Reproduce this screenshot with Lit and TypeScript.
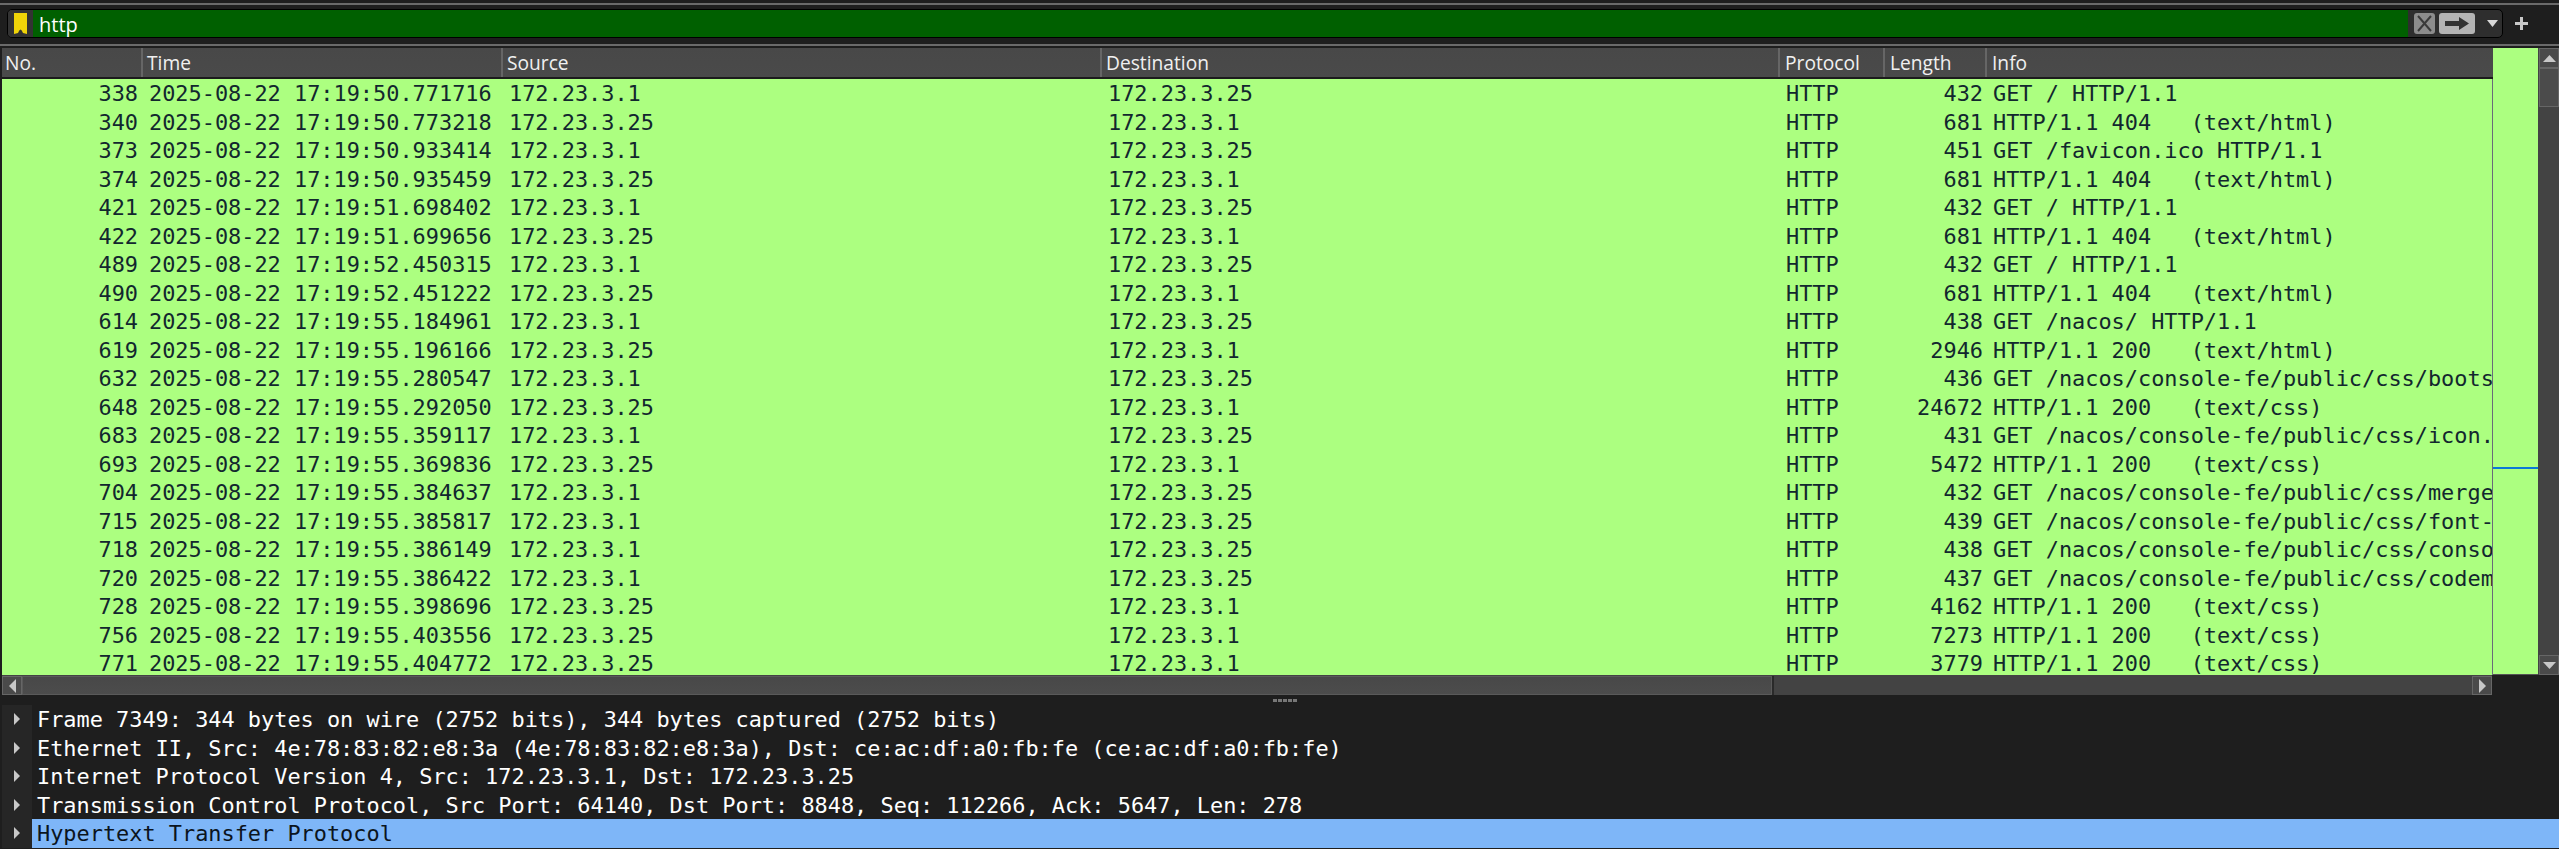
import { LitElement, html, css } from "lit";
import { customElement } from "lit/decorators.js";

const P: [string, string, string, string, string, string][] = [
  ["338","50.771716","172.23.3.1","172.23.3.25","432","GET / HTTP/1.1"],
  ["340","50.773218","172.23.3.25","172.23.3.1","681","HTTP/1.1 404   (text/html)"],
  ["373","50.933414","172.23.3.1","172.23.3.25","451","GET /favicon.ico HTTP/1.1"],
  ["374","50.935459","172.23.3.25","172.23.3.1","681","HTTP/1.1 404   (text/html)"],
  ["421","51.698402","172.23.3.1","172.23.3.25","432","GET / HTTP/1.1"],
  ["422","51.699656","172.23.3.25","172.23.3.1","681","HTTP/1.1 404   (text/html)"],
  ["489","52.450315","172.23.3.1","172.23.3.25","432","GET / HTTP/1.1"],
  ["490","52.451222","172.23.3.25","172.23.3.1","681","HTTP/1.1 404   (text/html)"],
  ["614","55.184961","172.23.3.1","172.23.3.25","438","GET /nacos/ HTTP/1.1"],
  ["619","55.196166","172.23.3.25","172.23.3.1","2946","HTTP/1.1 200   (text/html)"],
  ["632","55.280547","172.23.3.1","172.23.3.25","436","GET /nacos/console-fe/public/css/boots"],
  ["648","55.292050","172.23.3.25","172.23.3.1","24672","HTTP/1.1 200   (text/css)"],
  ["683","55.359117","172.23.3.1","172.23.3.25","431","GET /nacos/console-fe/public/css/icon."],
  ["693","55.369836","172.23.3.25","172.23.3.1","5472","HTTP/1.1 200   (text/css)"],
  ["704","55.384637","172.23.3.1","172.23.3.25","432","GET /nacos/console-fe/public/css/merge"],
  ["715","55.385817","172.23.3.1","172.23.3.25","439","GET /nacos/console-fe/public/css/font-"],
  ["718","55.386149","172.23.3.1","172.23.3.25","438","GET /nacos/console-fe/public/css/conso"],
  ["720","55.386422","172.23.3.1","172.23.3.25","437","GET /nacos/console-fe/public/css/codem"],
  ["728","55.398696","172.23.3.25","172.23.3.1","4162","HTTP/1.1 200   (text/css)"],
  ["756","55.403556","172.23.3.25","172.23.3.1","7273","HTTP/1.1 200   (text/css)"],
  ["771","55.404772","172.23.3.25","172.23.3.1","3779","HTTP/1.1 200   (text/css)"],
];
const TREE = [
  "Frame 7349: 344 bytes on wire (2752 bits), 344 bytes captured (2752 bits)",
  "Ethernet II, Src: 4e:78:83:82:e8:3a (4e:78:83:82:e8:3a), Dst: ce:ac:df:a0:fb:fe (ce:ac:df:a0:fb:fe)",
  "Internet Protocol Version 4, Src: 172.23.3.1, Dst: 172.23.3.25",
  "Transmission Control Protocol, Src Port: 64140, Dst Port: 8848, Seq: 112266, Ack: 5647, Len: 278",
  "Hypertext Transfer Protocol",
];
const HEAD = ["No.", "Time", "Source", "Destination", "Protocol", "Length", "Info"];

@customElement("app-root")
export class AppRoot extends LitElement {
  static styles = css`
    :host { display: block; width: 2559px; height: 849px; overflow: hidden; background: #1e1e1e;
      font-family: "DejaVu Sans Mono", monospace; font-size: 21.9px; }
    * { box-sizing: border-box; }
    .top { height: 46px; display: flex; flex-direction: column; background: #1e1e1e; }
    .rule { height: 2px; background: #6a6a6a; flex: none; }
    .rule.a { margin-top: 3px; }
    .tools { flex: 1; display: flex; align-items: center; padding: 0 0 2px 7px; }
    .filter { width: 2496px; height: 29px; border: 1px solid #000; border-radius: 5px; background: #2e2e2e; display: flex; align-items: stretch; overflow: hidden; }
    .mark { width: 25px; flex: none; display: flex; align-items: center; justify-content: center; background: #333; padding-right: 1px; }
    .input { flex: 1; background: #006000; color: #fff; font: 20px/29px "Open Sans", sans-serif; padding-left: 6px; }
    .fbtn { width: 94px; flex: none; display: flex; align-items: center; gap: 4px; padding-left: 6px; }
    .plus { width: 13px; margin-left: 12px; flex: none; display: flex; }
    .list { height: 627px; display: flex; padding-left: 2px; background: #1e1e1e; margin-top: 2px; }
    .table { width: 2491px; flex: none; display: flex; flex-direction: column; }
    .head { height: 31px; display: grid; grid-template-columns: var(--cols); background: linear-gradient(#484848, #4a4a4a); border-bottom: 2px solid #1c1c1c; flex: none; color: #f0f0f0; font: 19.2px/29px "Open Sans", sans-serif; }
    .head div { padding-left: 4px; border-right: 2px solid #666; overflow: hidden; }
    .head div:first-child { padding-left: 3px; }
    .head div:nth-child(n + 5) { padding-left: 5px; }
    .head div:last-child { border-right: 0; }
    .rows { flex: 1; background: #acff80; color: #12272e; overflow: hidden; border-right: 1px solid #6a6a7a; padding-top: 1px; }
    .row { height: 28.5px; display: grid; grid-template-columns: var(--cols); line-height: 28.5px; white-space: pre; }
    .row div { padding-left: 6px; overflow: hidden; }
    .row .r { text-align: right; padding: 0 4px 0 0; }
    .row .no { padding-right: 5px; }
    .mini { width: 45px; flex: none; background: #acff80; position: relative; border-bottom: 1px solid #555; }
    .mini i { position: absolute; left: 0; right: 0; top: 419px; height: 2px; background: #0a78d7; }
    .vbar { width: 21px; flex: none; display: flex; flex-direction: column; background: #434343; padding-left: 1px; }
    .sb { background: #4a4a4a; border: 1px solid #666; display: flex; align-items: center; justify-content: center; flex: none; }
    .vbar .sb { height: 20px; }
    .vbar .thumb { height: 39px; background: #4b4b4b; border: 1px solid #666; flex: none; }
    .sp { flex: 1; }
    .hbarwrap { height: 21px; display: flex; padding-left: 2px; }
    .hbar { width: 2490px; display: flex; background: #434343; height: 20px; padding-top: 1px; }
    .hbar .sb { width: 20px; }
    .hthumb { width: 1750px; background: linear-gradient(#484848, #4c4c4c); border: 1px solid #5a5a5a; box-shadow: 2px 0 0 #2a2a2a; }
    .split { height: 9px; display: flex; justify-content: center; align-items: center; gap: 1px; padding-left: 10px; }
    .split i { width: 4px; height: 3px; background: #777; }
    .tree { color: #fff; display: flex; flex-direction: column; }
    .node { height: 28.5px; display: flex; line-height: 28.5px; white-space: pre; padding-left: 2px; }
    .exp { width: 30px; flex: none; background: #262626; display: flex; align-items: center; justify-content: center; }
    .txt { flex: 1; padding-left: 5px; padding-top: 1px; }
    .node.sel .txt { background: #7eb6f8; color: #0b1420; }
  `;

  render() {
    const cols = "141px 360px 599px 678px 105px 102px 1fr";
    const tri = (d: string, w = 10, h = 12) => html`<svg width=${w} height=${h} viewBox="0 0 ${w} ${h}"><path d=${d} fill="#c8c8c8"/></svg>`;
    return html`
      <div class="top">
        <div class="rule a"></div>
        <div class="tools">
          <div class="filter">
            <div class="mark"><svg width="13" height="21" viewBox="0 0 13 21"><path d="M0 0H13V21L9 20Q6.5 13 4 20L0 21Z" fill="#f0d408"/></svg></div>
            <div class="input">http</div>
            <div class="fbtn">
              <svg width="21" height="21" viewBox="0 0 21 21"><rect width="21" height="21" rx="3" fill="#8c8c8c"/><path d="M4 3L17 18M17 3L4 18" stroke="#3a3a3a" stroke-width="2"/></svg>
              <svg width="36" height="21" viewBox="0 0 36 21"><rect width="36" height="21" rx="3" fill="#b4b4b4"/><path d="M6 8H20V4L30 10.5L20 17V13H6Z" fill="#333"/></svg>
              <svg style="margin-left:8px" width="11" height="7" viewBox="0 0 11 7"><path d="M0 0H11L5.5 7Z" fill="#d8d8d8"/></svg>
            </div>
          </div>
          <div class="plus"><svg width="13" height="13" viewBox="0 0 13 13"><path d="M6.5 0V13M0 6.5H13" stroke="#c8c8c8" stroke-width="3"/></svg></div>
        </div>
        <div class="rule"></div>
      </div>
      <div class="list" style="--cols:${cols}">
        <div class="table">
          <div class="head">${HEAD.map((h) => html`<div>${h}</div>`)}</div>
          <div class="rows">
            ${P.map((p) => html`<div class="row">
              <div class="r no">${p[0]}</div>
              <div>2025-08-22 17:19:${p[1]}</div>
              <div>${p[2]}</div>
              <div>${p[3]}</div>
              <div>HTTP</div>
              <div class="r">${p[4]}</div>
              <div>${p[5]}</div>
            </div>`)}
          </div>
        </div>
        <div class="mini"><i></i></div>
        <div class="vbar">
          <div class="sb">${tri("M0 7L6.5 0L13 7Z", 13, 7)}</div>
          <div class="thumb"></div>
          <div class="sp"></div>
          <div class="sb">${tri("M0 0L6.5 7L13 0Z", 13, 7)}</div>
        </div>
      </div>
      <div class="hbarwrap">
        <div class="hbar">
          <div class="sb">${tri("M7 0V14L0 7Z", 7, 14)}</div>
          <div class="hthumb"></div>
          <div class="sp"></div>
          <div class="sb">${tri("M0 0V14L7 7Z", 7, 14)}</div>
        </div>
      </div>
      <div class="split">${[0, 1, 2, 3, 4].map(() => html`<i></i>`)}</div>
      <div class="tree">
        ${TREE.map((t, i) => html`<div class="node ${i === 4 ? "sel" : ""}">
          <div class="exp">${tri("M0 0V12L6 6Z", 6, 12)}</div>
          <div class="txt">${t}</div>
        </div>`)}
      </div>
    `;
  }
}
